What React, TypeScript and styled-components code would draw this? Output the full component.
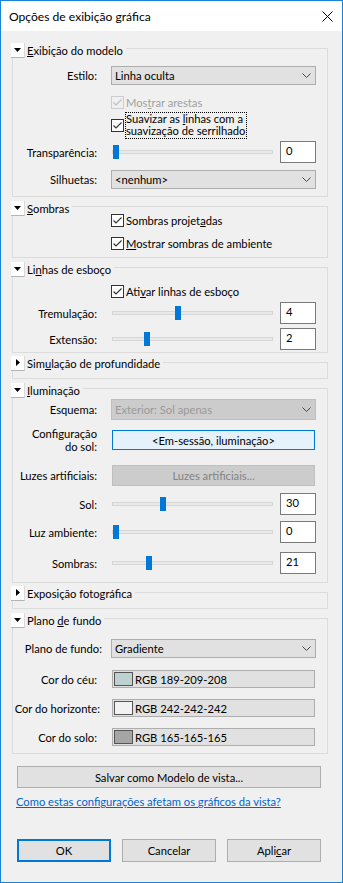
import React from 'react';
import styled, { createGlobalStyle } from 'styled-components';

const GlobalStyle = createGlobalStyle`
  html, body {
    margin: 0;
    padding: 0;
    background: #f0f0f0;
  }
  body {
    font-family: Lato, "Segoe UI", "Noto Sans", sans-serif;
    font-size: 11.2px;
    color: #000;
  }
`;

const Window = styled.div`
  width: 343px;
  height: 883px;
  box-sizing: border-box;
  border: 1px solid #1883d7;
  background: #f0f0f0;
  display: flex;
  flex-direction: column;
`;

const TitleBar = styled.div`
  height: 30px;
  flex: none;
  background: #fff;
  display: flex;
  align-items: center;
  justify-content: space-between;
  padding: 0 9px 0 8px;
`;

const Title = styled.span`
  font-size: 12.1px;
`;

const Body = styled.div`
  padding-top: 8px;
  display: flex;
  flex-direction: column;
`;

const Group = styled.fieldset<{ $pb: number }>`
  margin: 2px 14px 0 11px;
  padding: 0 0 ${(p) => p.$pb}px 0;
  border: 1px solid #dcdcdc;
  min-width: 0;
`;

const Legend = styled.legend`
  margin-left: -2px;
  padding: 0 3px 0 0;
  height: 15px;
`;

const LegendInner = styled.span`
  display: inline-flex;
  align-items: center;
  height: 15px;
  gap: 2px;
`;

const Toggle = styled.span`
  width: 13px;
  height: 14px;
  background: #fff;
  border-right: 1px solid #dadada;
  border-bottom: 1px solid #b4b4b4;
  display: flex;
  align-items: center;
  justify-content: center;
`;

const Key = styled.span`
  text-decoration: underline;
`;

const Row = styled.div<{ $mt: number; $h: number }>`
  display: grid;
  grid-template-columns: 84px 205px;
  column-gap: 14px;
  align-items: center;
  margin-top: ${(p) => p.$mt}px;
  height: ${(p) => p.$h}px;
`;

const Label = styled.div<{ $over?: number }>`
  text-align: right;
  white-space: nowrap;
  line-height: 13px;
  margin-right: ${(p) => -(p.$over ?? 0)}px;
`;

const SelectBox = styled.div<{ $disabled?: boolean; $h?: number }>`
  height: ${(p) => p.$h ?? 19}px;
  box-sizing: border-box;
  border: 1px solid ${(p) => (p.$disabled ? '#bfbfbf' : '#adadad')};
  background: ${(p) => (p.$disabled ? '#cccccc' : '#e1e1e1')};
  color: ${(p) => (p.$disabled ? '#9a9a9a' : '#000')};
  display: flex;
  align-items: center;
  justify-content: space-between;
  padding: 0 4px 0 3px;
`;

const CheckItem = styled.div<{ $disabled?: boolean }>`
  grid-column: 2;
  display: flex;
  align-items: center;
  gap: 2px;
  color: ${(p) => (p.$disabled ? '#a0a0a0' : '#000')};
`;

const Box = styled.span<{ $disabled?: boolean }>`
  width: 13px;
  height: 13px;
  flex: none;
  box-sizing: border-box;
  border: 1px solid ${(p) => (p.$disabled ? '#cccccc' : '#333')};
  background: ${(p) => (p.$disabled ? '#f0f0f0' : '#fff')};
  display: flex;
`;

const Focused = styled.span`
  outline: 1px dotted #000;
  outline-offset: 0;
  line-height: 12.5px;
  padding: 0 1px 0 0;
`;

const SliderCell = styled.div`
  display: flex;
  align-items: center;
  justify-content: space-between;
  height: 100%;
`;

const Track = styled.div`
  position: relative;
  width: 161px;
  height: 4px;
  margin-left: 1px;
  box-sizing: border-box;
  background: #e7eaea;
  border: 1px solid #d6d6d6;
`;

const Thumb = styled.div`
  position: absolute;
  top: 50%;
  margin-top: -7px;
  width: 6px;
  height: 14px;
  background: #0078d7;
`;

const NumBox = styled.div`
  width: 36px;
  height: 22px;
  box-sizing: border-box;
  border: 1px solid #7a7a7a;
  background: #fff;
  padding: 1px 0 0 5px;
  line-height: 16px;
`;

const PushButton = styled.div<{ $variant: 'accent' | 'disabled' | 'normal'; $h: number }>`
  height: ${(p) => p.$h}px;
  box-sizing: border-box;
  margin: 0 1px;
  display: flex;
  align-items: center;
  justify-content: center;
  border: 1px solid
    ${(p) => (p.$variant === 'accent' ? '#0078d7' : p.$variant === 'disabled' ? '#bfbfbf' : '#adadad')};
  background: ${(p) => (p.$variant === 'accent' ? '#e5f1fb' : p.$variant === 'disabled' ? '#cccccc' : '#e1e1e1')};
  color: ${(p) => (p.$variant === 'disabled' ? '#838383' : '#000')};
`;

const ColorField = styled.div`
  height: 18px;
  box-sizing: border-box;
  margin: 0 1px;
  border: 1px solid #adadad;
  background: #e1e1e1;
  display: flex;
  align-items: center;
  gap: 2px;
  padding-left: 1px;
`;

const Swatch = styled.span<{ $c: string }>`
  width: 19px;
  height: 14px;
  box-sizing: border-box;
  border: 1px solid #555;
  background: ${(p) => p.$c};
`;

const WideButton = styled.div`
  margin: 12px 21px 0 16px;
  height: 22px;
  box-sizing: border-box;
  border: 1px solid #adadad;
  background: #e1e1e1;
  display: flex;
  align-items: center;
  justify-content: center;
`;

const HelpLink = styled.a`
  margin: 6px 0 0 15px;
  line-height: 16px;
  color: #0066cc;
  text-decoration: underline;
  align-self: flex-start;
  cursor: pointer;
`;

const Footer = styled.div`
  display: flex;
  gap: 11px;
  margin: 29px 0 0 16px;
`;

const DialogButton = styled.div<{ $default?: boolean }>`
  width: 94px;
  height: 23px;
  box-sizing: border-box;
  border: ${(p) => (p.$default ? '2px solid #0078d7' : '1px solid #adadad')};
  background: #e1e1e1;
  display: flex;
  align-items: center;
  justify-content: center;
`;

const Chevron = () => (
  <svg width="9" height="5" viewBox="0 0 9 5">
    <polyline points="0.5,0.5 4.5,4.5 8.5,0.5" fill="none" stroke="#444" strokeWidth="1" />
  </svg>
);

const Arrow = ({ open }: { open: boolean }) =>
  open ? (
    <svg width="7" height="4" viewBox="0 0 7 4">
      <polygon points="0,0 7,0 3.5,4" fill="#000" />
    </svg>
  ) : (
    <svg width="4" height="7" viewBox="0 0 4 7">
      <polygon points="0,0 4,3.5 0,7" fill="#000" />
    </svg>
  );

const Section = ({
  open = true,
  pb,
  title,
  children,
}: {
  open?: boolean;
  pb: number;
  title: React.ReactNode;
  children?: React.ReactNode;
}) => (
  <Group $pb={pb}>
    <Legend>
      <LegendInner>
        <Toggle>
          <Arrow open={open} />
        </Toggle>
        <span>{title}</span>
      </LegendInner>
    </Legend>
    {children}
  </Group>
);

const Check = ({ disabled, children }: { disabled?: boolean; children: React.ReactNode }) => (
  <CheckItem $disabled={disabled}>
    <Box $disabled={disabled}>
      <svg width="11" height="11" viewBox="0 0 11 11">
        <polyline
          points="1.5,5.5 4,8 9.5,2.5"
          fill="none"
          stroke={disabled ? '#bcbcbc' : '#333'}
          strokeWidth="1.1"
        />
      </svg>
    </Box>
    {children}
  </CheckItem>
);

const Slider = ({ value, max }: { value: number; max: number }) => (
  <SliderCell>
    <Track>
      <Thumb style={{ left: `${Math.round((value / max) * 155)}px` }} />
    </Track>
    <NumBox>{value}</NumBox>
  </SliderCell>
);

const Select = ({ value, disabled, h }: { value: string; disabled?: boolean; h?: number }) => (
  <SelectBox $disabled={disabled} $h={h}>
    <span>{value}</span>
    <Chevron />
  </SelectBox>
);

export default function App() {
  return (
    <>
      <GlobalStyle />
      <Window>
        <TitleBar>
          <Title>Opções de exibição gráfica</Title>
          <svg width="11" height="11" viewBox="0 0 11 11">
            <path d="M0.5,0.5 L10.5,10.5 M10.5,0.5 L0.5,10.5" stroke="#000" strokeWidth="1" />
          </svg>
        </TitleBar>
        <Body>
          <Section
            pb={7}
            title={
              <>
                <Key>E</Key>xibição do modelo
              </>
            }
          >
            <Row $mt={10} $h={19}>
              <Label>Estilo:</Label>
              <Select value="Linha oculta" />
            </Row>
            <Row $mt={10} $h={15}>
              <Check disabled>
                <span>
                  Mos<Key>t</Key>rar arestas
                </span>
              </Check>
            </Row>
            <Row $mt={2} $h={26}>
              <Check>
                <Focused>
                  Suavizar as <Key>l</Key>inhas com a
                  <br />
                  suavização de serrilhado
                </Focused>
              </Check>
            </Row>
            <Row $mt={3} $h={22}>
              <Label>Transparência:</Label>
              <Slider value={0} max={100} />
            </Row>
            <Row $mt={7} $h={19}>
              <Label>Silhuetas:</Label>
              <Select value="<nenhum>" />
            </Row>
          </Section>

          <Section
            pb={6}
            title={
              <>
                <Key>S</Key>ombras
              </>
            }
          >
            <Row $mt={-1} $h={15}>
              <Check>
                <span>
                  Sombras projet<Key>a</Key>das
                </span>
              </Check>
            </Row>
            <Row $mt={8} $h={15}>
              <Check>
                <span>
                  <Key>M</Key>ostrar sombras de ambiente
                </span>
              </Check>
            </Row>
          </Section>

          <Section
            pb={2}
            title={
              <>
                Li<Key>n</Key>has de esboço
              </>
            }
          >
            <Row $mt={9} $h={15}>
              <Check>
                <span>
                  Ati<Key>v</Key>ar linhas de esboço
                </span>
              </Check>
            </Row>
            <Row $mt={3} $h={22}>
              <Label>Tremulação:</Label>
              <Slider value={4} max={10} />
            </Row>
            <Row $mt={4} $h={22}>
              <Label>Extensão:</Label>
              <Slider value={2} max={10} />
            </Row>
          </Section>

          <Section
            open={false}
            pb={8}
            title={
              <>
                Sim<Key>u</Key>lação de profundidade
              </>
            }
          />

          <Section
            pb={8}
            title={
              <>
                <Key>I</Key>luminação
              </>
            }
          >
            <Row $mt={3} $h={21}>
              <Label>Esquema:</Label>
              <Select value="Exterior: Sol apenas" disabled h={21} />
            </Row>
            <Row $mt={7} $h={26}>
              <Label>
                Configuração
                <br />
                do sol:
              </Label>
              <PushButton $variant="accent" $h={20}>
                &lt;Em-sessão, iluminação&gt;
              </PushButton>
            </Row>
            <Row $mt={12} $h={21}>
              <Label>Luzes artificiais:</Label>
              <PushButton $variant="disabled" $h={21}>
                Luzes artificiais...
              </PushButton>
            </Row>
            <Row $mt={7} $h={22}>
              <Label>Sol:</Label>
              <Slider value={30} max={100} />
            </Row>
            <Row $mt={6} $h={22}>
              <Label>Luz ambiente:</Label>
              <Slider value={0} max={100} />
            </Row>
            <Row $mt={9} $h={22}>
              <Label>Sombras:</Label>
              <Slider value={21} max={100} />
            </Row>
          </Section>

          <Section open={false} pb={8} title="Exposição fotográfica" />

          <Section
            pb={7}
            title={
              <>
                Plano <Key>d</Key>e fundo
              </>
            }
          >
            <Row $mt={13} $h={19}>
              <Label $over={5}>Plano de fundo:</Label>
              <Select value="Gradiente" />
            </Row>
            <Row $mt={12} $h={18}>
              <Label>Cor do céu:</Label>
              <ColorField>
                <Swatch $c="rgb(189,209,208)" />
                RGB 189-209-208
              </ColorField>
            </Row>
            <Row $mt={11} $h={18}>
              <Label $over={3}>Cor do horizonte:</Label>
              <ColorField>
                <Swatch $c="rgb(242,242,242)" />
                RGB 242-242-242
              </ColorField>
            </Row>
            <Row $mt={11} $h={18}>
              <Label>Cor do solo:</Label>
              <ColorField>
                <Swatch $c="rgb(165,165,165)" />
                RGB 165-165-165
              </ColorField>
            </Row>
          </Section>

          <WideButton>Salvar como Modelo de vista...</WideButton>
          <HelpLink>Como estas configurações afetam os gráficos da vista?</HelpLink>

          <Footer>
            <DialogButton $default>OK</DialogButton>
            <DialogButton>Cancelar</DialogButton>
            <DialogButton>
              Apli<Key>c</Key>ar
            </DialogButton>
          </Footer>
        </Body>
      </Window>
    </>
  );
}
